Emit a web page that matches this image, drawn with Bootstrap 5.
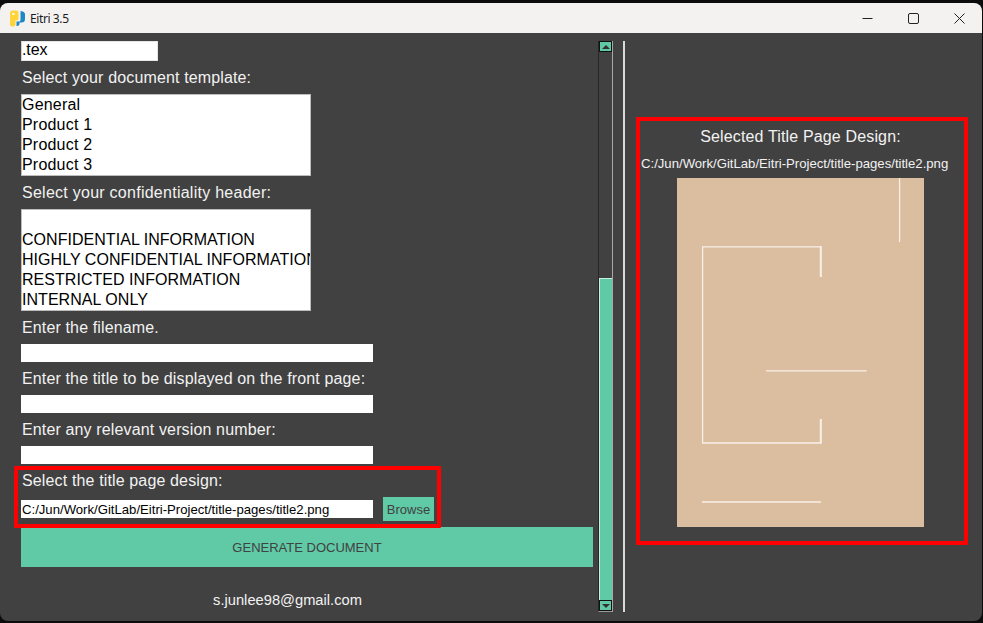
<!DOCTYPE html>
<html lang="en">
<head>
<meta charset="utf-8">
<title>Eitri 3.5</title>
<link href="https://cdn.jsdelivr.net/npm/bootstrap@5.3.0/dist/css/bootstrap.min.css" rel="stylesheet">
<style>
html,body{height:100%;margin:0;background:#0c0c0c;overflow:hidden}
body{font-family:"Liberation Sans",Arial,sans-serif;font-size:16px;color:#f2f2f2}
.win{width:983px;height:623px;padding-top:3px;position:relative}
.win-inner{height:618px;border-radius:8px;overflow:hidden;background:#414141;display:flex;flex-direction:column;margin:0 1px 0 0}
.tbar{height:30px;flex:none;background:#f3f2f0;color:#1a1a1a;display:flex;align-items:center;font:12px "Noto Sans","Open Sans",sans-serif;letter-spacing:-.4px}
.tbar svg.logo{margin:0 5px 0 10px}
.wbtns{margin-left:auto;display:flex}
.wbtn{width:46px;height:30px;display:flex;align-items:center;justify-content:center}
.main{flex:1;display:flex;min-height:0}
.leftp{width:598px;flex:none;padding:8px 0 0 21px}
.fld{height:20px;width:137px;background:#fff;color:#000;line-height:16px;padding-left:0;border:1px solid #e6e6e6;border-left-color:#d0d0d0;white-space:nowrap;overflow:hidden;letter-spacing:-.1px}
.lbl{height:33px;padding:8px 0 0 1px;line-height:17px;white-space:nowrap;letter-spacing:.14px}
.lbl-w{letter-spacing:.26px}
.lbx{width:290px;background:#fff;color:#000;border:1px solid #bdbdbd;line-height:20px;white-space:nowrap;overflow:hidden}
.lbx1{height:82px;letter-spacing:.2px}
.lbx2{height:102px;letter-spacing:.04px}
.ent{width:352px;height:18px;background:#fff}
.rowe{display:flex;align-items:center;height:24px}
.ent2{width:352px;height:18px;background:#fff;color:#000;font-size:13.15px;line-height:20px;padding-left:1px;white-space:nowrap;overflow:hidden}
.brow{margin-left:10px;width:51px;height:24px;background:#60c9a6;color:#414141;font-size:13px;line-height:26px;text-align:center;border-radius:0;padding:0;border:0}
.genb{display:block;width:572px;height:40px;margin-top:6px;background:#60c9a6;color:#414141;font-size:13px;line-height:42px;text-align:center;border-radius:0;padding:0;border:0}
.mail{width:533px;text-align:center;margin-top:25px;font-size:14.7px;line-height:17px;color:#f2f2f2}
.sbar{width:15px;flex:none;margin-top:8px;height:571px;border-style:solid;border-width:0 1px 1px 1px;border-color:#9a9a9a #a8a8a8 #9a9a9a #262626;background:#414141;display:flex;flex-direction:column}
.sarr{height:11px;flex:none;background:#60c9a6;border:1px solid #111;display:flex;align-items:center;justify-content:center}
.strk{flex:1;display:flex;flex-direction:column;justify-content:flex-end}
.sthumb{height:322px;background:#60c9a6;border-top:1px solid #c8eee0;border-left:1px solid #c8eee0}
.tri-u{width:0;height:0;border-left:4px solid transparent;border-right:4px solid transparent;border-bottom:4px solid #333}
.tri-d{width:0;height:0;border-left:4px solid transparent;border-right:4px solid transparent;border-top:4px solid #333}
.vsep{width:2px;flex:none;margin:8px 0 0 10px;height:571px;background:#d9d9d9}
.rightp{flex:1;padding:94px 0 0 13px;min-width:0}
.rt{width:325px;text-align:center;line-height:19px;letter-spacing:.15px}
.rp{width:325px;font-size:13.15px;line-height:15px;margin-top:10px;padding-left:3px;white-space:nowrap;color:#f2f2f2}
.thumb{display:block;margin:7px 0 0 39px}
.mark-a{position:absolute;border:4px solid #f00;border-radius:1px;pointer-events:none}
.mark-1{left:14px;top:466px;width:427px;height:62px}
.mark-2{left:636px;top:117px;width:332px;height:428px}
</style>
</head>
<body>
<div class="win">
<div class="win-inner">
  <div class="tbar">
    <svg class="logo" width="15" height="17" viewBox="0 0 15 17"><path d="M0 3Q0 .5 3 .5H6.5Q8.5 .5 8.5 3V8.5Q8.5 10.5 6.5 10.5H5.5V14.5Q5.5 16.5 3 16.5Q0 16.5 0 14.5Z" fill="#ffd43b"/><path d="M10 1Q15 1 15 4.5V9Q15 12.5 11.5 12.5H9.5V14Q9.5 16 7 16L6.5 16V11.5H9.5Q10.5 11.5 10.5 9.5V1Z" fill="#1e88c7"/><rect x="2.5" y="3" width="2" height="2" fill="#fff"/></svg>
    <span>Eitri 3.5</span>
    <div class="wbtns">
      <div class="wbtn"><svg width="11" height="11"><path d="M0.5 5.5H10.5" stroke="#222" fill="none"/></svg></div>
      <div class="wbtn"><svg width="11" height="11"><rect x="0.5" y="0.5" width="10" height="10" rx="1.5" stroke="#222" fill="none"/></svg></div>
      <div class="wbtn"><svg width="11" height="11"><path d="M0.5 0.5L10.5 10.5M10.5 0.5L0.5 10.5" stroke="#222" fill="none"/></svg></div>
    </div>
  </div>
  <div class="main">
    <div class="leftp">
      <div class="fld">.tex</div>
      <div class="lbl">Select your document template:</div>
      <div class="lbx lbx1">General<br>Product 1<br>Product 2<br>Product 3</div>
      <div class="lbl lbl-w">Select your confidentiality header:</div>
      <div class="lbx lbx2">&nbsp;<br>CONFIDENTIAL INFORMATION<br>HIGHLY CONFIDENTIAL INFORMATION<br>RESTRICTED INFORMATION<br>INTERNAL ONLY</div>
      <div class="lbl">Enter the filename.</div>
      <div class="ent"></div>
      <div class="lbl">Enter the title to be displayed on the front page:</div>
      <div class="ent"></div>
      <div class="lbl">Enter any relevant version number:</div>
      <div class="ent"></div>
      <div class="lbl">Select the title page design:</div>
      <div class="rowe"><div class="ent2">C:/Jun/Work/GitLab/Eitri-Project/title-pages/title2.png</div><button class="btn brow" type="button">Browse</button></div>
      <button class="btn genb" type="button">GENERATE DOCUMENT</button>
      <div class="mail">s.junlee98@gmail.com</div>
    </div>
    <div class="sbar">
      <div class="sarr"><span class="tri-u"></span></div>
      <div class="strk"><div class="sthumb"></div></div>
      <div class="sarr"><span class="tri-d"></span></div>
    </div>
    <div class="vsep"></div>
    <div class="rightp">
      <div class="rt">Selected Title Page Design:</div>
      <div class="rp">C:/Jun/Work/GitLab/Eitri-Project/title-pages/title2.png</div>
      <svg class="thumb" width="247" height="349" viewBox="0 0 247 349"><rect width="247" height="349" fill="#dbbda0"/><g stroke="#f8f0e8" stroke-width="1.3" fill="none"><path d="M222.6 0V64"/><path d="M25.6 265V68.8H143"/><path d="M25 265H144.8"/><path d="M143.8 68V99" stroke-width="2"/><path d="M143.8 241V265" stroke-width="2"/><path d="M89 192.8H189.7"/><path d="M25 324H144"/></g></svg>
    </div>
  </div>
</div>
<div class="mark-a mark-1"></div>
<div class="mark-a mark-2"></div>
</div>
</body>
</html>
